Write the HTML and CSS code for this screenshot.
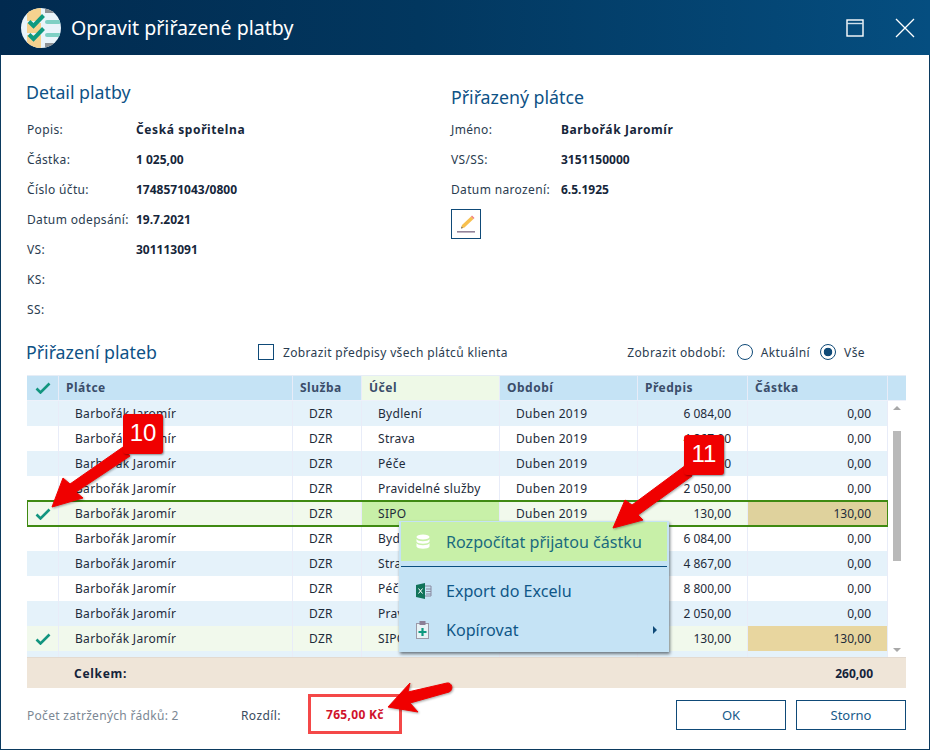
FILE: index.html
```html
<!DOCTYPE html>
<html lang="cs">
<head>
<meta charset="utf-8">
<title>Opravit přiřazené platby</title>
<link rel="stylesheet" href="styles.css">
</head>
<body>
<div class="window">
  <header class="titlebar">
    <svg class="logo" viewBox="0 0 40 40" width="40" height="40">
      <defs><clipPath id="lc"><circle cx="20" cy="20" r="20"/></clipPath></defs>
      <g clip-path="url(#lc)">
        <rect width="40" height="40" fill="#eaf4fa"/>
        <rect x="6" y="0" width="14" height="13" fill="#f6d28f"/>
        <rect x="6" y="15" width="14" height="10" fill="#f6d28f"/>
        <rect x="6" y="27" width="14" height="13" fill="#f6d28f"/>
        <rect x="24" y="0" width="16" height="5" fill="#8e9296"/>
        <rect x="24" y="35" width="16" height="5" fill="#8e9296"/>
        <rect x="24" y="12" width="16" height="4" rx="2" fill="#7fd0c4"/>
        <rect x="24" y="25" width="16" height="4" rx="2" fill="#7fd0c4"/>
        <path d="M8 13.5l4.5 4.5 10-10.5M8 26.500l4.500 4.500 10-10.500" fill="none" stroke="#0f9a80" stroke-width="4"/>
      </g>
    </svg>
    <h1 class="title">Opravit přiřazené platby</h1>
    <svg class="winbtn winbtn-max" viewBox="0 0 18 18" width="18" height="18">
      <rect x="1" y="1" width="16" height="16" fill="none" stroke="#fff" stroke-width="1.4"/>
      <path d="M1 4.500h16" stroke="#cfe0ec" stroke-width="1.400"/>
    </svg>
    <svg class="winbtn winbtn-close" viewBox="0 0 20 20" width="20" height="20">
      <path d="M1 1l18 18M19 1L1 19" stroke="#fff" stroke-width="1.300" fill="none"/>
    </svg>
  </header>

  <main class="content">
    <section class="details">
      <div class="detail detail-left">
        <h2 class="heading heading-left">Detail platby</h2>
        <dl class="fields">
          <dt>Popis:</dt><dd class="name">Česká spořitelna</dd>
          <dt>Částka:</dt><dd>1 025,00</dd>
          <dt>Číslo účtu:</dt><dd>1748571043/0800</dd>
          <dt>Datum odepsání:</dt><dd>19.7.2021</dd>
          <dt>VS:</dt><dd>301113091</dd>
          <dt>KS:</dt><dd></dd>
          <dt>SS:</dt><dd></dd>
        </dl>
      </div>
      <div class="detail detail-right">
        <h2 class="heading">Přiřazený plátce</h2>
        <dl class="fields">
          <dt>Jméno:</dt><dd class="name">Barbořák Jaromír</dd>
          <dt>VS/SS:</dt><dd>3151150000</dd>
          <dt>Datum narození:</dt><dd>6.5.1925</dd>
        </dl>
        <button class="edit-btn" type="button" aria-label="Upravit">
          <svg viewBox="0 0 20 20" width="20" height="20">
            <rect x="1" y="17" width="18" height="1.600" fill="#93849a"/>
            <path d="M5 14.500l1-3.500L15 2.500l2.500 2.500L8.500 13.500z" fill="#f7c04f"/>
            <path d="M15 2.500l1-1 2.500 2.500-1 1z" fill="#ef7d7d"/>
            <path d="M5 14.500l.6-2 1.400 1.400z" fill="#6b6b6b"/>
          </svg>
        </button>
      </div>
    </section>

    <div class="toolbar">
      <h2 class="heading heading-left heading-grid">Přiřazení plateb</h2>
      <label class="check-label"><span class="checkbox"></span>Zobrazit předpisy všech plátců klienta</label>
      <div class="period">
        <span class="period-label">Zobrazit období:</span>
        <span class="radio"></span><span class="radio-text">Aktuální</span>
        <span class="radio radio-on"></span><span class="radio-text">Vše</span>
      </div>
    </div>

    <div class="grid">
      <div class="row row-head">
        <div class="cell cell-check"><svg class="tick" viewBox="0 0 16 12" width="16" height="12"><path d="M1.500 6.500l4 4L14.500 1.500" fill="none" stroke="#12957f" stroke-width="2.600"/></svg></div>
        <div class="cell">Plátce</div><div class="cell">Služba</div><div class="cell cell-sorted">Účel</div><div class="cell">Období</div><div class="cell">Předpis</div><div class="cell">Částka</div><div class="cell cell-last"></div>
      </div>
      <div class="grid-body">
        <div class="rows">
          <div class="row alt"><div class="cell cell-check"></div><div class="cell">Barbořák Jaromír</div><div class="cell">DZR</div><div class="cell">Bydlení</div><div class="cell">Duben 2019</div><div class="cell num">6 084,00</div><div class="cell num">0,00</div></div>
          <div class="row"><div class="cell cell-check"></div><div class="cell">Barbořák Jaromír</div><div class="cell">DZR</div><div class="cell">Strava</div><div class="cell">Duben 2019</div><div class="cell num">4 867,00</div><div class="cell num">0,00</div></div>
          <div class="row alt"><div class="cell cell-check"></div><div class="cell">Barbořák Jaromír</div><div class="cell">DZR</div><div class="cell">Péče</div><div class="cell">Duben 2019</div><div class="cell num">8 800,00</div><div class="cell num">0,00</div></div>
          <div class="row"><div class="cell cell-check"></div><div class="cell">Barbořák Jaromír</div><div class="cell">DZR</div><div class="cell">Pravidelné služby</div><div class="cell">Duben 2019</div><div class="cell num">2 050,00</div><div class="cell num">0,00</div></div>
          <div class="row row-checked row-current"><div class="cell cell-check"><svg class="tick" viewBox="0 0 16 12" width="16" height="12"><path d="M1.500 6.500l4 4L14.500 1.500" fill="none" stroke="#12957f" stroke-width="2.600"/></svg></div><div class="cell">Barbořák Jaromír</div><div class="cell">DZR</div><div class="cell cell-active">SIPO</div><div class="cell">Duben 2019</div><div class="cell num">130,00</div><div class="cell num cell-amount-current">130,00</div></div>
          <div class="row"><div class="cell cell-check"></div><div class="cell">Barbořák Jaromír</div><div class="cell">DZR</div><div class="cell">Bydlení</div><div class="cell">Duben 2019</div><div class="cell num">6 084,00</div><div class="cell num">0,00</div></div>
          <div class="row alt"><div class="cell cell-check"></div><div class="cell">Barbořák Jaromír</div><div class="cell">DZR</div><div class="cell">Strava</div><div class="cell">Duben 2019</div><div class="cell num">4 867,00</div><div class="cell num">0,00</div></div>
          <div class="row"><div class="cell cell-check"></div><div class="cell">Barbořák Jaromír</div><div class="cell">DZR</div><div class="cell">Péče</div><div class="cell">Duben 2019</div><div class="cell num">8 800,00</div><div class="cell num">0,00</div></div>
          <div class="row alt"><div class="cell cell-check"></div><div class="cell">Barbořák Jaromír</div><div class="cell">DZR</div><div class="cell">Pravidelné služby</div><div class="cell">Duben 2019</div><div class="cell num">2 050,00</div><div class="cell num">0,00</div></div>
          <div class="row row-checked"><div class="cell cell-check"><svg class="tick" viewBox="0 0 16 12" width="16" height="12"><path d="M1.500 6.500l4 4L14.500 1.500" fill="none" stroke="#12957f" stroke-width="2.600"/></svg></div><div class="cell">Barbořák Jaromír</div><div class="cell">DZR</div><div class="cell">SIPO</div><div class="cell">Duben 2019</div><div class="cell num">130,00</div><div class="cell num cell-amount">130,00</div></div>
          <div class="row alt row-partial"><div class="cell cell-check"></div><div class="cell"></div><div class="cell"></div><div class="cell"></div><div class="cell"></div><div class="cell"></div><div class="cell"></div></div>
        </div>
        <div class="scrollbar">
          <span class="arrow arrow-up"></span>
          <span class="thumb"></span>
          <span class="arrow arrow-down"></span>
        </div>
      </div>
      <div class="total">
        <span class="total-label">Celkem:</span>
        <span class="total-value">260,00</span>
      </div>

      <div class="menu">
        <div class="menu-item menu-item-hover">
          <svg class="menu-icon" viewBox="0 0 14 16" width="14" height="16">
            <ellipse cx="7" cy="3" rx="6.500" ry="2.500" fill="#fff"/>
            <path d="M.5 5c1 3 12 3 13 0v2.500c-1 3-12 3-13 0zM.5 9c1 3 12 3 13 0v3.500c-1 3-12 3-13 0z" fill="#fff"/>
          </svg>
          <span>Rozpočítat přijatou částku</span>
        </div>
        <div class="menu-sep"></div>
        <div class="menu-item menu-item-export">
          <svg class="menu-icon" viewBox="0 0 16 16" width="16" height="16">
            <path d="M0 2l9-2v16l-9-2z" fill="#11735a"/>
            <path d="M9 3h6v10H9" fill="none" stroke="#8a8aa0" stroke-width="1"/>
            <path d="M10 6h5M10 8.500h5M10 11h5" stroke="#8a8aa0" stroke-width="1"/>
            <path d="M2.500 5.500l4 5M6.500 5.500l-4 5" stroke="#fff" stroke-width="1"/>
          </svg>
          <span>Export do Excelu</span>
        </div>
        <div class="menu-item menu-item-copy">
          <svg class="menu-icon" viewBox="0 0 14 18" width="14" height="18">
            <rect x=".5" y="2.500" width="12" height="15" fill="#e8f3f6" stroke="#9b9aa8"/>
            <rect x="3.500" y="0" width="6" height="4" fill="#8c7f96"/>
            <path d="M6.500 7v8M2.500 11h8" stroke="#0f9a80" stroke-width="2.200"/>
          </svg>
          <span>Kopírovat</span>
          <span class="menu-caret"></span>
        </div>
      </div>
    </div>

    <footer class="footer">
      <span class="count">Počet zatržených řádků: 2</span>
      <span class="diff-label">Rozdíl:</span>
      <span class="diff-value">765,00 Kč</span>
      <div class="buttons">
        <button class="btn" type="button">OK</button>
        <button class="btn" type="button">Storno</button>
      </div>
    </footer>
  </main>

  <svg class="arrows" viewBox="0 0 930 750" width="930" height="750" aria-hidden="true">
    <path d="M52 507L63 478L70 484L123 447L130 456L76 492L83 498Z" fill="#f00000" stroke="#f00000" stroke-width="1" stroke-linejoin="round"/>
    <path d="M613 528L625 500L632 505L686 465L692 476L638 515L643 520Z" fill="#f00000" stroke="#f00000" stroke-width="1" stroke-linejoin="round"/>
    <path d="M388 707L410 683L408 692L447 683C452 682 454 690 449 692L410 703L418 712Z" fill="#f00000" stroke="#f00000" stroke-width="1" stroke-linejoin="round"/>
  </svg>
  <div class="badge badge-10">10</div>
  <div class="badge badge-11">11</div>
</div>
</body>
</html>
```
FILE: styles.css
```css
* { box-sizing: border-box; }
html, body { margin: 0; padding: 0; }
body { width: 930px; height: 750px; overflow: hidden; background: #fff; font-family: "Noto Sans", sans-serif; font-size: 12px; color: #1d2b3a; }
.window { position: relative; width: 930px; height: 750px; border: 1px solid #0b3a5f; border-top: 0; display: flex; flex-direction: column; background: #fff; }
.titlebar { height: 55px; flex: none; margin: 0 -1px; padding: 0 15px 0 21px; display: flex; align-items: center; background: linear-gradient(90deg, #012a4f 0%, #02375f 45%, #054e80 100%); }
.logo { flex: none; }
.title { margin: 0 0 0 10px; flex: 1; font-size: 19.600px; font-weight: 400; color: #fff; }
.winbtn { flex: none; }
.winbtn-max { margin-right: 31px; }
.content { flex: 1; padding: 0 23px 0 26px; display: flex; flex-direction: column; }
.details { display: flex; height: 280px; }
.detail-left { width: 424px; padding-top: 25px; }
.detail-right { padding-top: 30px; }
.heading { margin: 0; font-size: 17.750px; line-height: 24px; font-weight: 400; color: #0e5286; }
.heading-left { margin-left: -1px; }
.fields { margin: 10px 0 0; display: grid; grid-template-columns: 109px auto; grid-auto-rows: 30px; align-items: center; }
.detail-right .fields { grid-template-columns: 110px auto; margin-top: 5px; }
.fields dt { color: #2a3c50; letter-spacing: .35px; }
.fields dd { margin: 0; font-weight: 700; color: #16263a; }
.fields .name { letter-spacing: .6px; }
.edit-btn { display: flex; align-items: center; justify-content: center; width: 30px; height: 30px; margin-top: 5px; padding: 0; border: 1px solid #0f4a78; background: #fff; }
.toolbar { height: 34px; flex: none; display: flex; align-items: center; margin-bottom: 6px; }
.heading-grid { width: 232px; }
.check-label { display: flex; align-items: center; color: #2a3c50; letter-spacing: .35px; }
.checkbox { width: 16px; height: 16px; margin-right: 9px; border: 1.500px solid #0f4a78; background: #fff; }
.period { margin-left: auto; display: flex; align-items: center; padding-right: 41px; color: #2a3c50; letter-spacing: .4px; }
.period-label { margin-right: 11px; }
.radio { width: 16px; height: 16px; border-radius: 50%; border: 1.500px solid #0f4a78; background: #fff; margin-right: 8px; }
.radio-text { margin-right: 10px; }
.radio-text:last-child { margin-right: 0; }
.radio-on { background: radial-gradient(circle, #0f4a78 0 4px, #fff 4.600px); }
.grid { position: relative; width: 879px; height: 313px; flex: none; border-top: 1px solid #e6edf6; display: flex; flex-direction: column; }
.row { display: grid; grid-template-columns: 32px 234px 69px 138px 138px 110px 140px; height: 25px; background: #fff; letter-spacing: .3px; }
.row-head { grid-template-columns: 32px 234px 69px 138px 138px 110px 140px 18px; height: 25px; flex: none; background: #c5e3f5; font-weight: 700; color: #3a4d6a; border-bottom: 1px solid #edf1fa; letter-spacing: .5px; }
.row-head .cell { padding-left: 7px; padding-bottom: 2px; }
.row-head .cell-sorted { background: #eef9e7; }
.row-head .cell-last { border-right: 0; }
.cell { display: flex; align-items: center; padding-left: 16px; border-right: 1px solid #e8ecf8; white-space: nowrap; overflow: hidden; }
.row-head .cell-check, .cell-check { padding: 0; justify-content: center; }
.num { justify-content: flex-end; padding: 0 16px 0 0; letter-spacing: 0; }
.alt { background: #e5f2fa; }
.row-checked { background: #f1f9ec; }
.row-current { position: relative; outline: 2px solid #3f8a12; outline-offset: -1px; }
.cell-active { background: #c8f0a8; }
.cell-amount-current { background: #dfd29d; }
.cell-amount { background: #e8d69f; }
.grid-body { display: flex; height: 256px; flex: none; }
.rows { width: 861px; height: 256px; overflow: hidden; }
.row-partial { height: 6px; }
.scrollbar { width: 18px; display: flex; flex-direction: column; align-items: center; background: #fff; padding: 5px 0; }
.arrow { width: 0; height: 0; border: 4px solid transparent; }
.arrow-up { border-bottom: 4px solid #a8a8a8; border-top: 0; }
.thumb { width: 8px; height: 130px; margin-top: 21px; background: #b9b9b9; }
.arrow-down { margin-top: auto; border-top: 4px solid #a8a8a8; border-bottom: 0; }
.total { height: 31px; flex: none; display: flex; align-items: center; justify-content: space-between; padding: 0 33px 0 47px; background: #efe5d8; border-top: 1px solid #e3dad0; font-weight: 700; color: #14233a; }
.total-label { letter-spacing: .7px; }
.menu { position: absolute; left: 372px; top: 145px; width: 270px; height: 131px; background: #c5e3f5; padding: 1px 2px 0; box-shadow: 1px 2px 3px rgba(40, 50, 60, .65); font-size: 16.100px; color: #0f5788; }
.menu-item { position: relative; display: flex; align-items: center; padding-left: 45px; }
.menu-item-hover { height: 39px; background: #c8f0a8; color: #1a6a7e; }
.menu-icon { position: absolute; left: 15px; }
.menu-sep { height: 1px; margin-top: 5px; background: #0b4f80; }
.menu-item-export { height: 39px; margin-top: 4px; }
.menu-item-copy { height: 39px; }
.menu-caret { position: absolute; right: 10px; width: 0; height: 0; border-left: 4px solid #0f4a78; border-top: 4px solid transparent; border-bottom: 4px solid transparent; }
.footer { flex: 1; display: flex; align-items: center; padding-bottom: 7px; }
.count { width: 214px; color: #7b8794; letter-spacing: .3px; }
.diff-label { width: 85px; color: #3a4b5e; letter-spacing: .4px; }
.diff-value { width: 94px; height: 40px; margin: 0 0 2px -18px; padding-left: 15px; display: flex; align-items: center; border: 3px solid #f44848; font-weight: 700; color: #d0122b; letter-spacing: .3px; }
.buttons { margin-left: auto; display: flex; gap: 10px; }
.btn { width: 110px; height: 30px; padding: 0; border: 1px solid #0f4a78; background: #fff; font: 13px "Noto Sans", sans-serif; color: #175a8a; }
.arrows { position: absolute; left: -1px; top: 0; pointer-events: none; filter: drop-shadow(1px 1px 1px rgba(0,0,0,.35)); }
.badge { position: absolute; width: 40px; height: 40px; border-radius: 3px; background: #f00000; color: #fff; font: 24px/38px "Liberation Sans", sans-serif; text-align: center; box-shadow: 1px 1px 2px rgba(0,0,0,.4); }
.badge-10 { left: 122px; top: 414px; }
.badge-11 { left: 683px; top: 435px; }
```
